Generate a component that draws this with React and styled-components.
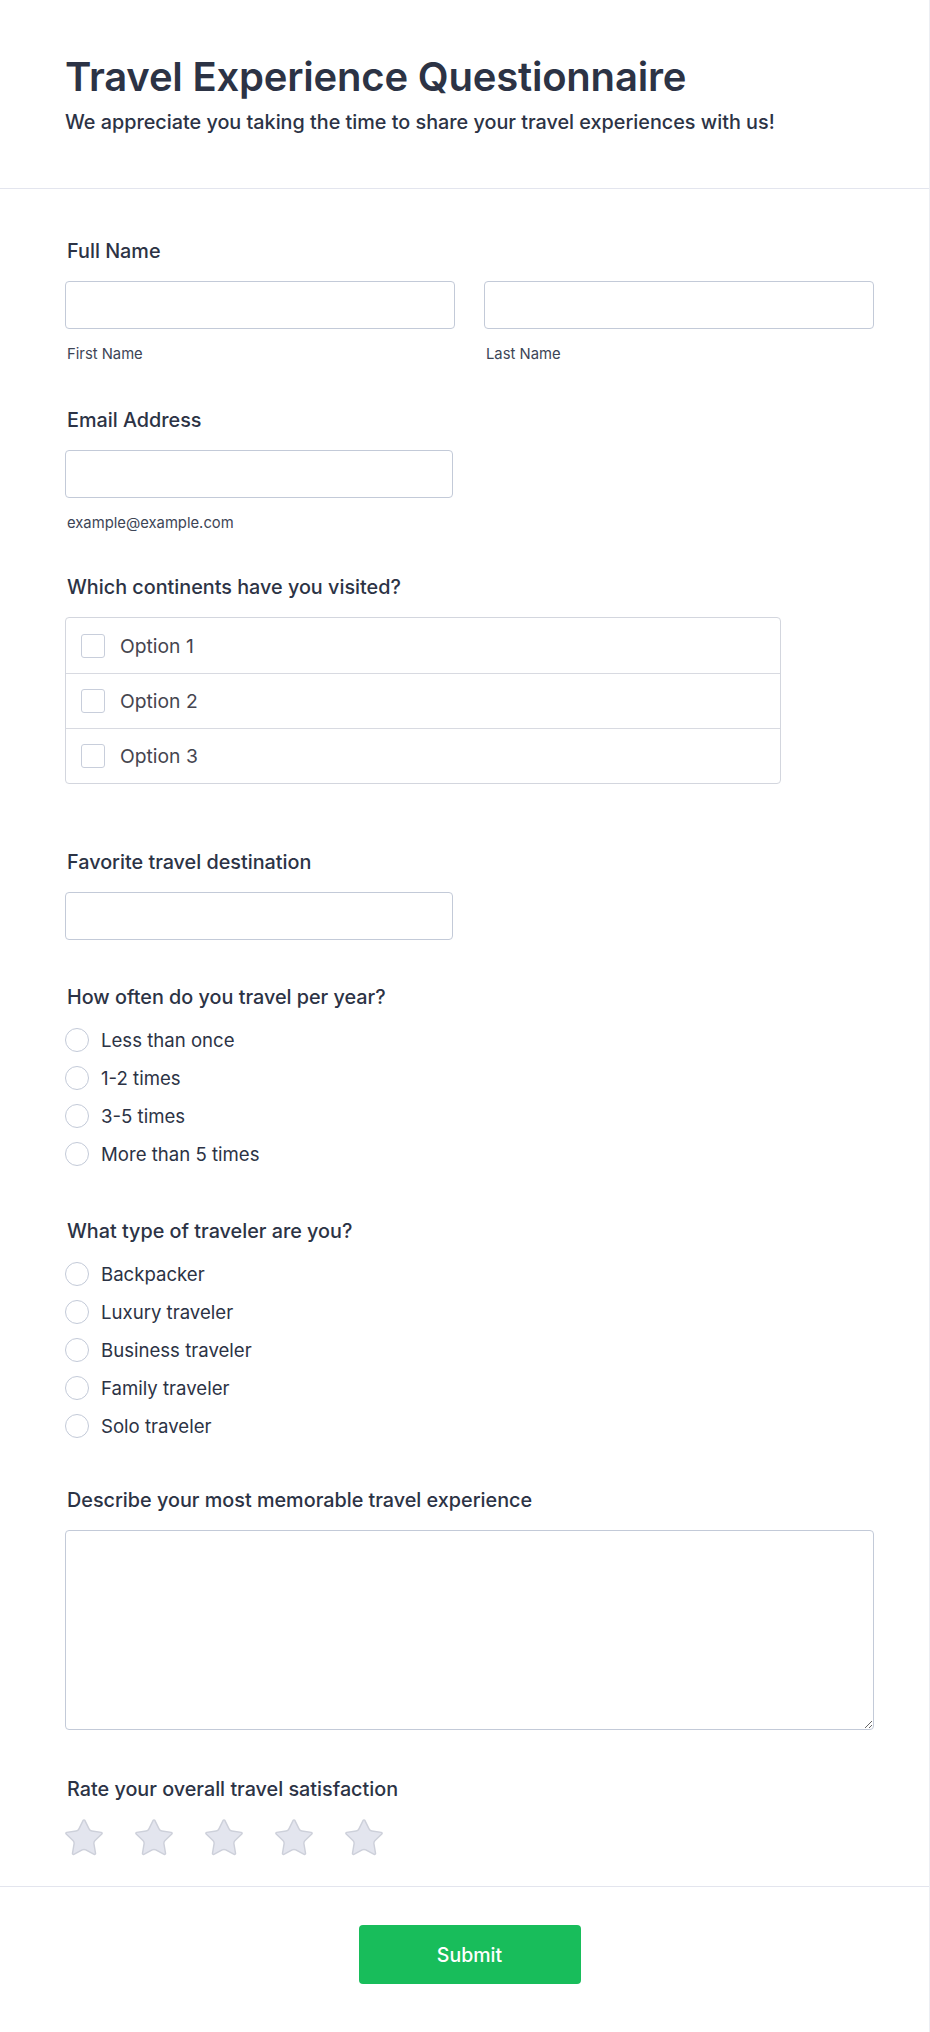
import React from 'react';
import styled, { createGlobalStyle } from 'styled-components';

const GlobalStyle = createGlobalStyle`
  * { box-sizing: border-box; }
  body {
    margin: 0;
    background: #fff;
    font-family: Inter, "Noto Sans", sans-serif;
    color: #2c3345;
  }
`;

const Page = styled.div`
  width: 930px;
  min-height: 2032px;
  background: #fff;
  border-right: 1px solid #eceef3;
  border-bottom: 1px solid #eceef3;
`;

const Header = styled.header`
  padding: 53px 55px 54px 65px;
  border-bottom: 1px solid #e3e5ee;
`;

const Title = styled.h1`
  margin: 0;
  font-size: 40px;
  line-height: 48px;
  font-weight: 600;
  letter-spacing: -0.2px;
  color: #2c3345;
`;

const Subtitle = styled.p`
  margin: 9px 0 0;
  font-size: 19.8px;
  line-height: 24px;
  font-weight: 500;
  color: #2c3345;
`;

const Body = styled.form`
  padding: 50px 55px 0 65px;
`;

const Field = styled.div`
  margin-bottom: ${p => p.$space ?? 45}px;
`;

const Label = styled.label`
  display: block;
  margin: 0 0 18px 2px;
  font-size: 19.8px;
  line-height: 24px;
  font-weight: 500;
  color: #2c3345;
`;

const Columns = styled.div`
  display: grid;
  grid-template-columns: 1fr 1fr;
  column-gap: 29px;
`;

const Input = styled.input`
  display: block;
  width: ${p => p.$width || '100%'};
  height: 48px;
  padding: 0 12px;
  border: 1px solid #c3cad8;
  border-radius: 4px;
  background: #fff;
  font-family: inherit;
  font-size: 16px;
  color: #2c3345;
  outline: none;
`;

const SubLabel = styled.span`
  display: block;
  margin: 16px 0 0 2px;
  font-size: 14.8px;
  line-height: 18px;
  color: #3d4556;
`;

const CheckGroup = styled.div`
  width: 716px;
  border: 1px solid #d3d6de;
  border-radius: 4px;
  overflow: hidden;
`;

const CheckRow = styled.label`
  display: flex;
  align-items: center;
  gap: 15px;
  height: 55px;
  padding: 0 15px;
  border-top: ${p => (p.$first ? 'none' : '1px solid #d8dae1')};
  font-size: 19.3px;
  color: #45454f;
`;

const CheckBox = styled.input.attrs({ type: 'checkbox' })`
  appearance: none;
  margin: 0;
  width: 24px;
  height: 24px;
  border: 1px solid #c8cedb;
  border-radius: 3px;
  background: #fff;
`;

const RadioList = styled.div`
  display: flex;
  flex-direction: column;
  margin-top: -6px;
`;

const RadioRow = styled.label`
  display: flex;
  align-items: center;
  gap: 12px;
  height: 38px;
  font-size: 18.6px;
  color: #2c3345;
`;

const Radio = styled.input.attrs({ type: 'radio' })`
  appearance: none;
  margin: 0;
  width: 24px;
  height: 24px;
  border: 1px solid #c3cad8;
  border-radius: 50%;
  background: #fff;
`;

const TextArea = styled.textarea`
  display: block;
  width: 100%;
  height: 200px;
  padding: 10px 12px;
  border: 1px solid #c3cad8;
  border-radius: 4px;
  font-family: inherit;
  font-size: 16px;
  color: #2c3345;
  outline: none;
`;

const Stars = styled.div`
  display: flex;
  gap: 32px;
  margin-top: 0;
`;

const StarIcon = styled.svg`
  width: 38px;
  height: 38px;
  display: block;
`;

const Footer = styled.div`
  margin-top: 29px;
  border-top: 1px solid #e3e5ee;
  padding: 38px 55px 50px 65px;
  display: flex;
  justify-content: center;
`;

const SubmitButton = styled.button`
  width: 222px;
  height: 59px;
  border: none;
  border-radius: 4px;
  background: #18bd5b;
  color: #fff;
  font-family: inherit;
  font-size: 19.5px;
  font-weight: 500;
  cursor: pointer;
`;

const Star = () => (
  <StarIcon viewBox="1.5 1.5 21 21">
    <path
      d="M11.525 2.295a.53.53 0 0 1 .95 0l2.31 4.679a2.123 2.123 0 0 0 1.595 1.16l5.166.756a.53.53 0 0 1 .294.904l-3.736 3.638a2.123 2.123 0 0 0-.611 1.878l.882 5.14a.53.53 0 0 1-.771.56l-4.618-2.428a2.122 2.122 0 0 0-1.973 0L6.396 21.01a.53.53 0 0 1-.77-.56l.881-5.139a2.122 2.122 0 0 0-.611-1.879L2.16 9.795a.53.53 0 0 1 .294-.906l5.165-.755a2.122 2.122 0 0 0 1.597-1.16z"
      fill="#e3e5ee"
      stroke="#cdd0da"
      strokeWidth="0.8"
      strokeLinejoin="round"
    />
  </StarIcon>
);

const frequency = ['Less than once', '1-2 times', '3-5 times', 'More than 5 times'];
const travelers = ['Backpacker', 'Luxury traveler', 'Business traveler', 'Family traveler', 'Solo traveler'];

const App = () => {
  return (
    <Page>
      <GlobalStyle />
      <Header>
        <Title>Travel Experience Questionnaire</Title>
        <Subtitle>We appreciate you taking the time to share your travel experiences with us!</Subtitle>
      </Header>

      <Body onSubmit={e => e.preventDefault()}>
        <Field>
          <Label>Full Name</Label>
          <Columns>
            <div>
              <Input />
              <SubLabel>First Name</SubLabel>
            </div>
            <div>
              <Input />
              <SubLabel>Last Name</SubLabel>
            </div>
          </Columns>
        </Field>

        <Field $space={43}>
          <Label>Email Address</Label>
          <Input $width="388px" />
          <SubLabel>example@example.com</SubLabel>
        </Field>

        <Field $space={66}>
          <Label>Which continents have you visited?</Label>
          <CheckGroup>
            {['Option 1', 'Option 2', 'Option 3'].map((opt, i) => (
              <CheckRow key={opt} $first={i === 0}>
                <CheckBox />
                {opt}
              </CheckRow>
            ))}
          </CheckGroup>
        </Field>

        <Field>
          <Label>Favorite travel destination</Label>
          <Input $width="388px" />
        </Field>

        <Field $space={46}>
          <Label>How often do you travel per year?</Label>
          <RadioList>
            {frequency.map(f => (
              <RadioRow key={f}>
                <Radio name="frequency" />
                {f}
              </RadioRow>
            ))}
          </RadioList>
        </Field>

        <Field $space={43}>
          <Label>What type of traveler are you?</Label>
          <RadioList>
            {travelers.map(t => (
              <RadioRow key={t}>
                <Radio name="traveler" />
                {t}
              </RadioRow>
            ))}
          </RadioList>
        </Field>

        <Field $space={47}>
          <Label>Describe your most memorable travel experience</Label>
          <TextArea />
        </Field>

        <Field $space={0}>
          <Label>Rate your overall travel satisfaction</Label>
          <Stars>
            {[1, 2, 3, 4, 5].map(n => (
              <Star key={n} />
            ))}
          </Stars>
        </Field>
      </Body>

      <Footer>
        <SubmitButton type="submit">Submit</SubmitButton>
      </Footer>
    </Page>
  );
};

export default App;
